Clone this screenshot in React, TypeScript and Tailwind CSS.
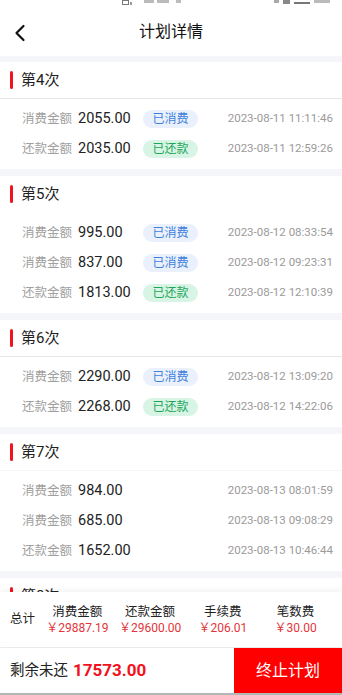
import React from 'react';

type Row = { label: string; amount: string; badge?: 'spend' | 'repay'; time: string };
type Section = { title: string; divider: 'solid' | 'faint' | 'none'; rows: Row[] };

const sections: Section[] = [
  {
    title: '第4次',
    divider: 'solid',
    rows: [
      { label: '消费金额', amount: '2055.00', badge: 'spend', time: '2023-08-11 11:11:46' },
      { label: '还款金额', amount: '2035.00', badge: 'repay', time: '2023-08-11 12:59:26' },
    ],
  },
  {
    title: '第5次',
    divider: 'none',
    rows: [
      { label: '消费金额', amount: '995.00', badge: 'spend', time: '2023-08-12 08:33:54' },
      { label: '消费金额', amount: '837.00', badge: 'spend', time: '2023-08-12 09:23:31' },
      { label: '还款金额', amount: '1813.00', badge: 'repay', time: '2023-08-12 12:10:39' },
    ],
  },
  {
    title: '第6次',
    divider: 'solid',
    rows: [
      { label: '消费金额', amount: '2290.00', badge: 'spend', time: '2023-08-12 13:09:20' },
      { label: '还款金额', amount: '2268.00', badge: 'repay', time: '2023-08-12 14:22:06' },
    ],
  },
  {
    title: '第7次',
    divider: 'faint',
    rows: [
      { label: '消费金额', amount: '984.00', time: '2023-08-13 08:01:59' },
      { label: '消费金额', amount: '685.00', time: '2023-08-13 09:08:29' },
      { label: '还款金额', amount: '1652.00', time: '2023-08-13 10:46:44' },
    ],
  },
  {
    title: '第8次',
    divider: 'solid',
    rows: [],
  },
];

const totals = [
  { label: '消费金额', value: '￥29887.19' },
  { label: '还款金额', value: '￥29600.00' },
  { label: '手续费', value: '￥206.01' },
  { label: '笔数费', value: '￥30.00' },
];

const BackIcon = () => (
  <svg width="12" height="18" viewBox="0 0 12 18" fill="none" stroke="#111" strokeWidth={2.2} strokeLinecap="round" strokeLinejoin="round">
    <path d="M9.5 2 L2.5 9 L9.5 16" />
  </svg>
);

const Badge = ({ kind }: { kind: 'spend' | 'repay' }) =>
  kind === 'spend' ? (
    <span className="flex h-[18px] w-[55px] items-center justify-center rounded-full bg-[#eaf1fd] text-[12px] text-[#3f7fdc]">已消费</span>
  ) : (
    <span className="flex h-[18px] w-[55px] items-center justify-center rounded-full bg-[#d8f4e4] text-[12px] text-[#1ba65a]">已还款</span>
  );

const SectionCard = ({ section }: { section: Section }) => (
  <div className="bg-white">
    <div
      className={`flex h-[37px] items-center pl-[10px] ${
        section.divider === 'solid'
          ? 'border-b border-[#e6e6e6]'
          : section.divider === 'faint'
          ? 'border-b border-[#f6f6f8]'
          : 'border-b border-white'
      }`}
    >
      <span className="h-[18px] w-[3px] rounded-full bg-[#f2131e]" />
      <span className="ml-[8px] text-[15px] text-[#222]">{section.title}</span>
    </div>
    {section.rows.length > 0 && (
      <div className="py-[5px]">
        {section.rows.map((r, i) => (
          <div key={i} className="flex h-[30px] items-center pl-[22px] pr-[9px]">
            <span className="w-[56px] text-[12.5px] text-[#a0a0a0]">{r.label}</span>
            <span className="w-[65px] text-[14.5px] text-[#222]">{r.amount}</span>
            <span className="w-[55px]">{r.badge && <Badge kind={r.badge} />}</span>
            <span className="ml-auto text-[11.5px] text-[#9a9a9a]">{r.time}</span>
          </div>
        ))}
      </div>
    )}
  </div>
);

export default function App() {
  return (
    <div
      className="flex h-[695px] w-[342px] flex-col overflow-hidden bg-[#f5f6fa]"
      style={{ fontFamily: 'Roboto, "Noto Sans CJK SC", sans-serif' }}
    >
      {/* status bar (cropped) */}
      <div className="flex h-[8px] items-start overflow-hidden bg-white">
        <div className="ml-[122px] flex items-start gap-[1px]">
          <span className="h-[5px] w-[7px] border border-[#777]" />
          <span className="mt-[2px] h-[3px] w-[2px] bg-[#999]" />
        </div>
        <div className="ml-[12px] flex items-start gap-[3px]">
          <span className="h-[3px] w-[10px] bg-[#bbb]" />
          <span className="h-[3px] w-[12px] bg-[#bbb]" />
          <span className="ml-[4px] h-[3px] w-[5px] bg-[#bbb]" />
        </div>
        <div className="ml-auto mr-[12px] flex items-start gap-[4px]">
          <span className="h-[3px] w-[5px] bg-[#aaa]" />
          <span className="h-[4px] w-[7px] bg-[#888]" />
          <span className="mt-[2px] h-[2px] w-[16px] bg-[#777]" />
          <span className="h-[3px] w-[16px] bg-[#bbb]" />
        </div>
      </div>

      {/* nav bar */}
      <div className="relative flex h-[48px] shrink-0 items-center justify-center bg-white">
        <span className="absolute left-[14px] top-[16px]">
          <BackIcon />
        </span>
        <span className="text-[16px] text-[#111]">计划详情</span>
      </div>

      {/* list */}
      <div className="flex flex-1 flex-col gap-[7px] overflow-hidden pt-[6px]">
        {sections.map((s) => (
          <SectionCard key={s.title} section={s} />
        ))}
      </div>

      {/* totals */}
      <div className="relative flex h-[55px] shrink-0 items-center bg-white pl-[10px] pr-[10px] shadow-[0_-2px_6px_rgba(0,0,0,0.05)]">
        <span className="w-[31px] text-[12.5px] text-[#222]">总计</span>
        <div className="grid flex-1 grid-cols-4">
          {totals.map((t) => (
            <div key={t.label} className="flex flex-col items-center leading-[16px]">
              <span className="text-[12.5px] text-[#222]">{t.label}</span>
              <span className="whitespace-nowrap text-[12px] text-[#e4343a]">{t.value}</span>
            </div>
          ))}
        </div>
      </div>

      {/* bottom bar */}
      <div className="flex h-[48px] shrink-0 items-stretch border-t border-[#ededed] border-b-2 border-b-[#b5b5b5] bg-white">
        <div className="flex flex-1 items-center pl-[10px]">
          <span className="text-[14.5px] text-[#222]">剩余未还</span>
          <span className="ml-[5px] text-[17px] font-bold text-[#f2111c]">17573.00</span>
        </div>
        <button className="w-[108px] bg-[#ff0000] text-[16px] text-white">终止计划</button>
      </div>
    </div>
  );
}
